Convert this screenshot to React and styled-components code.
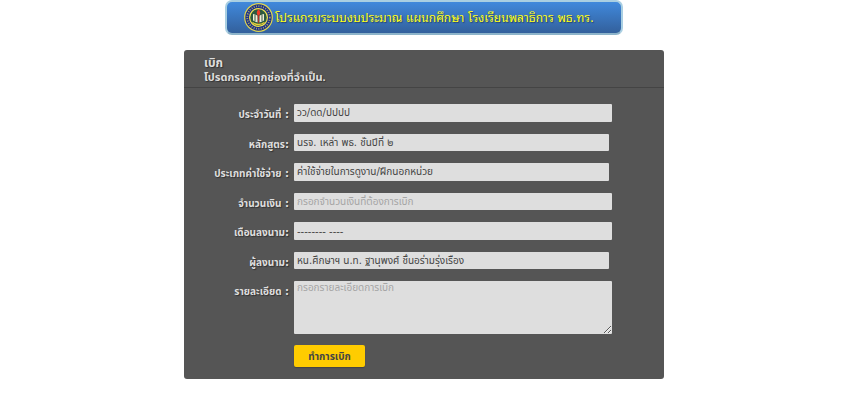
import React from "react";
import styled, { createGlobalStyle } from "styled-components";

const GlobalStyle = createGlobalStyle`
  * { box-sizing: border-box; }
  body {
    margin: 0;
    background: #fff;
    font-family: "DejaVu Sans", "Noto Sans Thai", "Noto Sans", sans-serif;
  }
`;

const Page = styled.div`
  display: flex;
  flex-direction: column;
  align-items: center;
  gap: 15px;
  padding-right: 8px;
`;

const Banner = styled.header`
  display: flex;
  align-items: center;
  gap: 2px;
  width: 100%;
  max-width: 398px;
  height: 35px;
  padding: 0 17px;
  border: 2px solid #a9cfe2;
  border-bottom-color: #8db4ca;
  border-radius: 7px;
  background: linear-gradient(#4089dc, #33609c);
`;

const BannerTitle = styled.h1`
  margin: 0;
  font-family: "DejaVu Serif", "Noto Sans Thai Looped", "Noto Serif Thai", serif;
  font-size: 12px;
  font-weight: 400;
  line-height: 24px;
  white-space: nowrap;
  color: #ffff14;
  text-shadow: 1px 1px 1px #24446e;
`;

const Emblem = styled.svg`
  flex: none;
  width: 29px;
  height: 31px;
`;

const Panel = styled.form`
  width: 100%;
  max-width: 480px;
  border-radius: 3px;
  background: #555;
  color: #dedede;
  text-shadow: 1px 1px 1px #333;
`;

const PanelHeader = styled.div`
  padding: 5px 20px 4px;
  border-bottom: 1px solid #444;
`;

const Title = styled.h2`
  margin: 0;
  font-size: 12px;
  line-height: 16px;
`;

const Note = styled.p`
  margin: 0;
  font-family: "Liberation Sans", "Noto Sans Thai", sans-serif;
  font-size: 11px;
  font-weight: 700;
  line-height: 12px;
`;

const Fields = styled.div`
  display: flex;
  flex-direction: column;
  gap: 12px;
  padding: 16px 52px 11px 20px;
`;

const Row = styled.div`
  display: grid;
  grid-template-columns: 85px minmax(0, 1fr);
  grid-template-rows: 100%;
  column-gap: 5px;
  height: ${(p) => p.$height}px;
`;

const Label = styled.label`
  padding-top: 3px;
  font-size: 10px;
  font-weight: 700;
  line-height: 16px;
  text-align: right;
  white-space: nowrap;
`;

const Input = styled.input`
  width: 100%;
  height: 100%;
  padding: 0 3px;
  border: 0;
  border-radius: 1px;
  background: #dedede;
  color: #444;
  font: 10px/16px "DejaVu Sans", "Noto Sans Thai", "Noto Sans", sans-serif;
  outline: none;
  &::placeholder { color: #a5a5a5; opacity: 1; }
`;

const Select = styled(Input).attrs({ as: "select" })`
  width: calc(100% - 3px);
  appearance: none;
`;

const TextArea = styled(Input).attrs({ as: "textarea" })`
  display: block;
  resize: both;
  line-height: 14px;
`;

const Actions = styled.div`
  padding: 0 52px 12px 110px;
`;

const Submit = styled.button`
  display: block;
  width: 71px;
  height: 22px;
  padding: 2px 0 0;
  border: 0;
  border-radius: 2px;
  background: #fc0;
  color: #444;
  font: 700 10px/20px "DejaVu Sans", "Noto Sans Thai", "Noto Sans", sans-serif;
  box-shadow: 0 1px 1px #444;
`;

const fields = [
  { id: "date", label: "ประจำวันที่ :", height: 18, value: "วว/ดด/ปปปป" },
  { id: "course", label: "หลักสูตร:", height: 17, option: "นรจ. เหล่า พธ. ชั้นปีที่ ๒" },
  { id: "type", label: "ประเภทค่าใช้จ่าย :", height: 18, option: "ค่าใช้จ่ายในการดูงาน/ฝึกนอกหน่วย" },
  { id: "amount", label: "จำนวนเงิน :", height: 17, hint: "กรอกจำนวนเงินที่ต้องการเบิก" },
  { id: "month", label: "เดือนลงนาม:", height: 18, value: "-------- ----" },
  { id: "signer", label: "ผู้ลงนาม:", height: 17, option: "หน.ศึกษาฯ น.ท. ฐานุพงศ์ ชื่นอร่ามรุ่งเรือง" },
];

function SchoolEmblem() {
  return (
    <Emblem viewBox="0 0 29 31" aria-hidden="true">
      <circle cx="14.5" cy="15.5" r="13.8" fill="#1b2f8a" stroke="#e0d650" strokeWidth="1.2" />
      <circle cx="14.5" cy="15.5" r="11.3" fill="none" stroke="#a9a76c" strokeWidth="1.8" strokeDasharray="1 1.4" />
      <circle cx="14.5" cy="15.5" r="8.900" fill="#2c5a40" stroke="#f0e050" strokeWidth="1.2" />
      <path d="M9 12l4.500 1.500v7l-4.500-2zM20 12l-4.500 1.500v7l4.500-2z" fill="#f3ecd8" />
      <path d="M11 13v6M18 13v6" stroke="#2c5a40" strokeWidth="1" />
      <path d="M14.500 7q-3.500 4 0 7 3.500-3 0-7z" fill="#f03a26" />
      <path d="M13.700 13h1.600l-.4 8h-.8z" fill="#b33028" />
      <path d="M8.500 20.500q6 4 12 0" fill="none" stroke="#e9cf38" strokeWidth="1.500" />
    </Emblem>
  );
}

function Control({ field }) {
  if (field.option) {
    return (
      <Select id={field.id}>
        <option>{field.option}</option>
      </Select>
    );
  }
  return <Input id={field.id} type="text" defaultValue={field.value} placeholder={field.hint} />;
}

export default function App() {
  return (
    <>
      <GlobalStyle />
      <Page>
        <Banner>
          <SchoolEmblem />
          <BannerTitle>โปรแกรมระบบงบประมาณ แผนกศึกษา โรงเรียนพลาธิการ พธ.ทร.</BannerTitle>
        </Banner>
        <Panel onSubmit={(e) => e.preventDefault()}>
          <PanelHeader>
            <Title>เบิก</Title>
            <Note>โปรดกรอกทุกช่องที่จำเป็น.</Note>
          </PanelHeader>
          <Fields>
            {fields.map((field) => (
              <Row key={field.id} $height={field.height}>
                <Label htmlFor={field.id}>{field.label}</Label>
                <Control field={field} />
              </Row>
            ))}
            <Row $height={53}>
              <Label htmlFor="detail">รายละเอียด :</Label>
              <TextArea id="detail" placeholder="กรอกรายละเอียดการเบิก" />
            </Row>
          </Fields>
          <Actions>
            <Submit type="submit">ทำการเบิก</Submit>
          </Actions>
        </Panel>
      </Page>
    </>
  );
}
